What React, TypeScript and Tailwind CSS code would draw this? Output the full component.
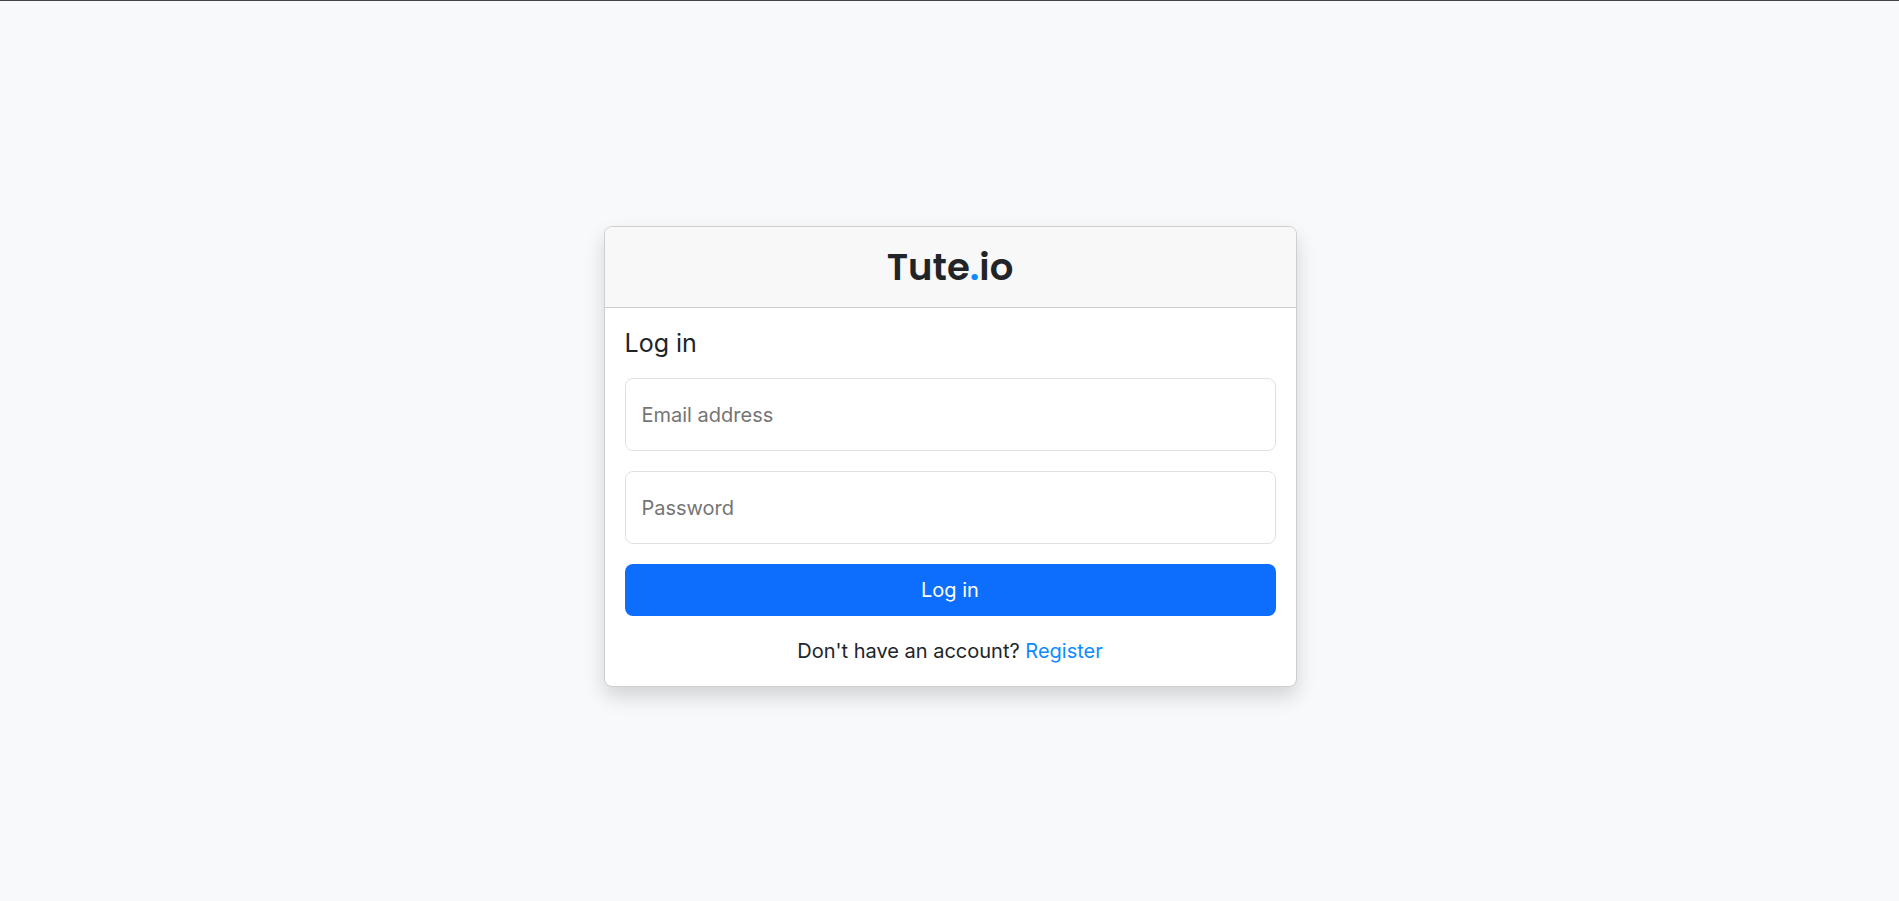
const fieldClass =
  "block h-[73px] w-full rounded-lg border border-[#dee2e6] bg-white px-4 text-xl text-[#212529] outline-none placeholder:text-[#757575] focus:border-[#86b7fe]";

function CardHeader() {
  return (
    <header className="flex h-[81px] items-center justify-center border-b border-[#cbcbcb] bg-[#f8f8f8]">
      <h1 className="font-[Poppins,Inter,sans-serif] text-[37px] leading-12 font-semibold">
        Tute<span className="text-[#0d8bff]">.</span>io
      </h1>
    </header>
  );
}

function LoginForm() {
  return (
    <form className="flex flex-col gap-5" onSubmit={(event) => event.preventDefault()}>
      <h2 className="text-[25px] leading-[30px]">Log in</h2>
      <input type="email" aria-label="Email address" placeholder="Email address" className={fieldClass} />
      <input type="password" aria-label="Password" placeholder="Password" className={fieldClass} />
      <button type="submit" className="h-[52px] rounded-lg bg-[#0d6efd] text-xl text-white">
        Log in
      </button>
      <p className="text-center text-xl leading-[30px]">
        Don't have an account?{" "}
        <a href="#register" className="text-[#0d8bff]">
          Register
        </a>
      </p>
    </form>
  );
}

export default function App() {
  return (
    <main className="flex min-h-screen items-center justify-center border-t border-[#45434b] bg-[#f8f9fb] pt-[11px] pl-px font-[Inter,sans-serif] text-[#212529]">
      <section className="w-full max-w-[693px] overflow-hidden rounded-lg border border-[#cfcfd0] bg-white shadow-[0_10px_20px_rgba(0,0,0,0.15)]">
        <CardHeader />
        <div className="p-5">
          <LoginForm />
        </div>
      </section>
    </main>
  );
}
